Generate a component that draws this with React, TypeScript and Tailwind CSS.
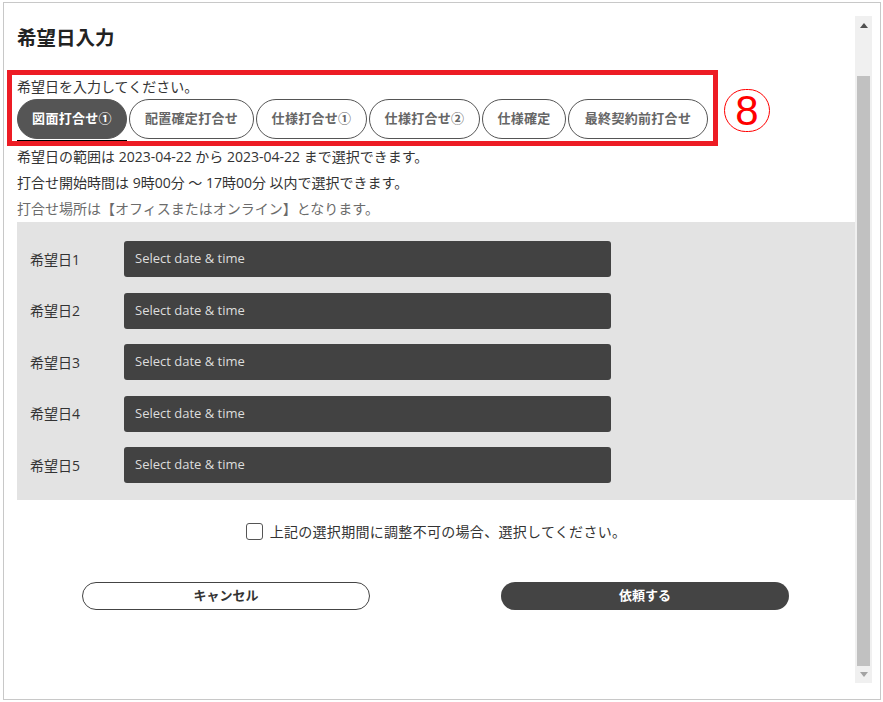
const tabs = ['図面打合せ①', '配置確定打合せ', '仕様打合せ①', '仕様打合せ②', '仕様確定', '最終契約前打合せ']
const tabWidths = ['w-[110px]', 'w-[125px]', 'w-[111px]', 'w-[111px]', 'w-[84px]', 'w-[140px]']

const font = { fontFamily: '"Open Sans", "Noto Sans CJK JP", sans-serif' }

function Tab({ label, width, active }: { label: string; width: string; active: boolean }) {
  return (
    <div className={`flex flex-col ${width}`}>
      <div
        className={
          active
            ? 'h-[40px] rounded-full bg-[#555555] border border-[#555555] flex items-center justify-center text-[13px] font-bold tracking-[0.3px] text-white'
            : 'h-[40px] rounded-full bg-white border border-[#555555] flex items-center justify-center text-[13px] font-bold tracking-[0.3px] text-[#666666]'
        }
      >
        {label}
      </div>
      <div className={active ? 'mt-[1px] h-[2px] bg-black' : 'mt-[1px] h-[2px]'} />
    </div>
  )
}

function DateRow({ n }: { n: number }) {
  return (
    <div className="flex items-center h-[36px]">
      <div className="w-[107px] pl-[13px] text-[14px] text-[#333333]">希望日{n}</div>
      <div className="w-[487px] h-[36px] rounded-[3px] bg-[#424242] flex items-center pl-[11px] text-[13px] text-[#dddddd]">
        Select date &amp; time
      </div>
    </div>
  )
}

export default function App() {
  return (
    <div className="relative w-[883px] h-[702px] bg-white pt-[2px] pl-[3px]" style={font}>
      <div className="w-[878px] h-[698px] border border-[#c8c8c8] flex">
        {/* main content */}
        <div className="ml-[13px] w-[838px] flex flex-col">
          <h1 className="mt-[21px] h-[28px] leading-[28px] text-[19.5px] font-bold text-[#222222]">希望日入力</h1>
          <p className="mt-[25px] h-[20px] leading-[20px] text-[14px] text-[#333333]">希望日を入力してください。</p>

          <div className="mt-[2px] flex gap-[2px]">
            {tabs.map((t, i) => (
              <Tab key={t} label={t} width={tabWidths[i]} active={i === 0} />
            ))}
          </div>

          <div className="mt-[2px] text-[14px] leading-[26px]">
            <p className="text-[#333333]">希望日の範囲は 2023-04-22 から 2023-04-22 まで選択できます。</p>
            <p className="text-[#333333]">打合せ開始時間は 9時00分 ～ 17時00分 以内で選択できます。</p>
            <p className="text-[#6b6b6b]">打合せ場所は【オフィスまたはオンライン】となります。</p>
          </div>

          <div className="bg-[#e3e3e3] pt-[19px] pb-[17px] flex flex-col gap-[15.5px]">
            {[1, 2, 3, 4, 5].map((n) => (
              <DateRow key={n} n={n} />
            ))}
          </div>

          <label className="mt-[21px] h-[20px] flex items-center justify-center gap-[7px] text-[14px] tracking-[0.3px] text-[#333333]">
            <span className="w-[17px] h-[17px] rounded-[3px] border border-[#555555] bg-white" />
            上記の選択期間に調整不可の場合、選択してください。
          </label>

          <div className="mt-[41px] ml-[65px] flex gap-[131px]">
            <button className="w-[288px] h-[28px] rounded-full border border-[#444444] bg-white text-[13px] font-bold text-[#333333]">
              キャンセル
            </button>
            <button className="w-[288px] h-[28px] rounded-full bg-[#444444] text-[13px] font-bold text-white">
              依頼する
            </button>
          </div>
        </div>

        {/* scrollbar */}
        <div className="mt-[13px] w-[17px] h-[667px] bg-[#f0f0f0] flex flex-col items-center">
          <div className="h-[18px] flex items-center justify-center">
            <svg width="8" height="5" viewBox="0 0 8 5">
              <path d="M4 0 L8 5 L0 5 Z" fill="#505050" />
            </svg>
          </div>
          <div className="mt-[42px] w-[13px] h-[590px] bg-[#c1c1c1]" />
          <div className="h-[17px] flex items-center justify-center">
            <svg width="8" height="5" viewBox="0 0 8 5">
              <path d="M0 0 L8 0 L4 5 Z" fill="#a3a3a3" />
            </svg>
          </div>
        </div>
      </div>

      {/* annotation overlay */}
      <div className="absolute left-[7px] top-[70px] w-[711px] h-[76px] border-[5px] border-[#ed1c24] pointer-events-none" />
      <div className="absolute left-[724px] top-[89px] w-[46px] h-[43px] rounded-full border border-[#ff0000] flex items-center justify-center text-[42px] leading-none text-[#ff0000]" style={{ fontFamily: '"Liberation Sans", sans-serif' }}>
        8
      </div>
    </div>
  )
}
